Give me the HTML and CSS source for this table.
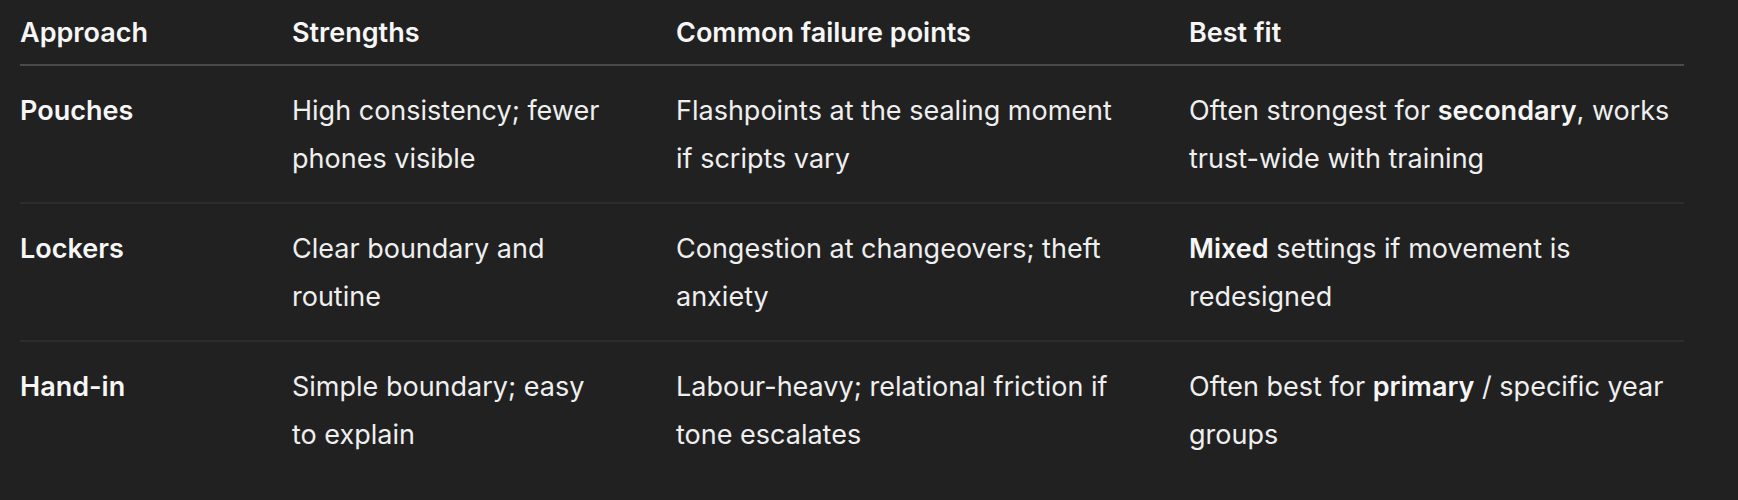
FILE: index.html
```html
<!DOCTYPE html>
<html lang="en">
<head>
<meta charset="utf-8">
<title>Approaches</title>
<link rel="stylesheet" href="styles.css">
</head>
<body>
<table class="grid">
  <colgroup>
    <col class="c1">
    <col class="c2">
    <col class="c3">
    <col class="c4">
  </colgroup>
  <thead>
    <tr>
      <th>Approach</th>
      <th>Strengths</th>
      <th>Common failure points</th>
      <th>Best fit</th>
    </tr>
  </thead>
  <tbody>
    <tr>
      <td class="name">Pouches</td>
      <td>High consistency; fewer phones visible</td>
      <td>Flashpoints at the sealing moment if scripts vary</td>
      <td>Often strongest for <strong>secondary</strong>, works trust-wide with training</td>
    </tr>
    <tr>
      <td class="name">Lockers</td>
      <td>Clear boundary and routine</td>
      <td>Congestion at changeovers; theft anxiety</td>
      <td><strong>Mixed</strong> settings if movement is redesigned</td>
    </tr>
    <tr>
      <td class="name">Hand-in</td>
      <td>Simple boundary; easy to explain</td>
      <td>Labour-heavy; relational friction if tone escalates</td>
      <td>Often best for <strong>primary</strong> / specific year groups</td>
    </tr>
  </tbody>
</table>
</body>
</html>
```

FILE: styles.css
```css
html, body {
  margin: 0;
  padding: 0;
  background: #212121;
}

body {
  font-family: Inter, "Noto Sans", "Liberation Sans", sans-serif;
  font-size: 27px;
  line-height: 48px;
  color: #efefef;
}

.grid {
  margin-left: 20px;
  width: 1664px;
  table-layout: fixed;
  border-collapse: collapse;
  border-spacing: 0;
}

.c1 { width: 272px; }
.c2 { width: 384px; }
.c3 { width: 513px; }
.c4 { width: 495px; }

.grid th {
  text-align: left;
  font-weight: 600;
  color: #f6f6f6;
  padding: 9px 0 7px 0;
  border-bottom: 2px solid #4a4a4a;
  vertical-align: top;
}

.grid td {
  padding: 21px 0 19px 0;
  vertical-align: top;
  border-bottom: 2px solid #2d2d2d;
}

.grid tbody tr:last-child td {
  border-bottom: none;
}

.grid td:nth-child(2) { padding-right: 64px; }
.grid td:nth-child(3) { padding-right: 58px; }

.grid td.name {
  font-weight: 600;
  color: #f6f6f6;
}

.grid strong {
  font-weight: 600;
  color: #f6f6f6;
}
```
